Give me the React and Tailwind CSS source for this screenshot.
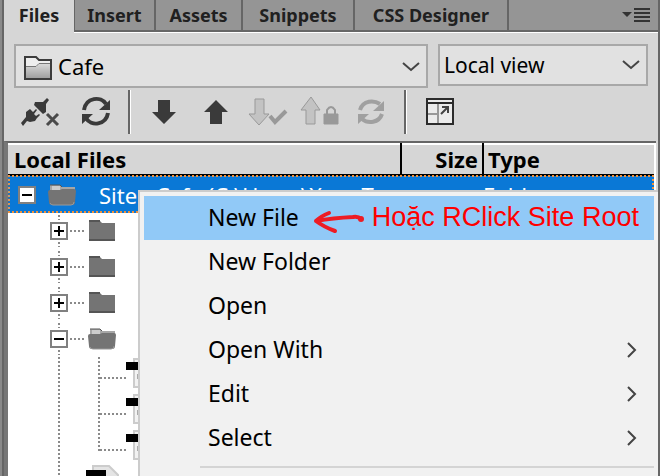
import React from "react";

const UI = "font-['Noto_Sans',sans-serif]";

function Chevron({ dir = "down", className = "" }) {
  return (
    <svg className={className} width="18" height="18" viewBox="0 0 18 18" fill="none" stroke="#444" strokeWidth="2" aria-hidden="true">
      <path d={dir === "down" ? "M1 5l8 7 8-7" : "M6 3l7 7-7 7"} />
    </svg>
  );
}

function SiteFolder({ className = "" }) {
  return (
    <svg className={className} width="28" height="24" viewBox="0 0 28 24" aria-hidden="true">
      <defs>
        <linearGradient id="sf" x1="0" y1="0" x2="0" y2="1">
          <stop offset="0" stopColor="#d8d8d8" />
          <stop offset="1" stopColor="#a0a0a0" />
        </linearGradient>
      </defs>
      <path d="M1 23V1h11l3 3h12v19z" fill="#eee" stroke="#3c3c3c" strokeWidth="2" />
      <path d="M2 22V11h10l3-3h11v14z" fill="url(#sf)" />
      <path d="M2 10.500h10l3-3h11" fill="none" stroke="#777" />
    </svg>
  );
}

function Folder({ open }) {
  return open ? (
    <svg width="28" height="22" viewBox="0 0 28 22" aria-hidden="true">
      <path d="M2 1h10l2 2h13v8H2z" fill="#a6a6a6" />
      <path d="M4 2h8v4H4z" fill="#ccc" />
      <path d="M2 1h10l2 2" fill="none" stroke="#555" strokeWidth="1" />
      <path d="M0 8q0-2 2-2h10l2-1h12q2 0 2 2l-1 11q0 3-3 3H4q-3 0-3-3z" fill="#747474" />
      <path d="M2 19q1 2 3 2h18q3 0 3-3" fill="none" stroke="#999" strokeWidth="1" />
    </svg>
  ) : (
    <svg width="28" height="22" viewBox="0 0 28 22" aria-hidden="true">
      <path d="M1 1h11l2 2h13v18H1z" fill="#747474" />
      <path d="M1 0h11v2H1zM1 19h26v2H1z" fill="#555" />
    </svg>
  );
}

function Toggle({ open, label }) {
  return (
    <button type="button" aria-label={label} aria-expanded={!!open} className="block size-[18px] shrink-0 border-2 border-[#808080] bg-white">
      <svg width="14" height="14" viewBox="0 0 14 14" aria-hidden="true">
        <path d={open ? "M2 7h10" : "M2 7h10M7 2v10"} stroke="#000" strokeWidth="2" />
      </svg>
    </button>
  );
}

const vDots = "w-[2px] bg-[repeating-linear-gradient(to_bottom,#8a8a8a_0px,#8a8a8a_2px,transparent_2px,transparent_4px)]";
const hDots = "h-[2px] bg-[repeating-linear-gradient(to_right,#8a8a8a_0px,#8a8a8a_2px,transparent_2px,transparent_4px)]";

function TreeRow({ open, label }) {
  return (
    <div className="flex h-9 items-center pl-[42px]">
      <div className="flex h-9 w-[18px] flex-col items-center">
        <span className={"my-[2px] flex-1 " + vDots} />
        <Toggle open={open} label={label} />
        <span className={"my-[2px] flex-1 " + vDots} />
      </div>
      <span className={"ml-[2px] mr-1 w-[14px] " + hDots} />
      <Folder open={open} />
    </div>
  );
}

function FileRow({ last }) {
  return (
    <div className="flex h-9 pl-[50px]">
      <span className={"h-9 " + vDots} />
      <span className="w-[38px]" />
      <span className={(last ? "h-[22px] " : "h-9 ") + vDots} />
      <span className={"mt-[20px] w-[26px] " + hDots} />
      <svg width="24" height="36" viewBox="0 0 24 36" aria-hidden="true">
        <path d="M8 2h16v28H8z" fill="#f2f2f2" stroke="#ccc" strokeWidth="2" />
        <path d="M11 17h12v5H11z" fill="#aaa" />
        <path d="M0 5h14v8H0z" fill="#000" />
      </svg>
    </div>
  );
}

const tools = [
  {
    label: "Connect", gap: "ml-[4px]", w: 40,
    art: (
      <g fill="#3a3a3a" stroke="none">
        <path d="M15 6h8l4-4 2 2-3 4v8l-3 2-9-9z" />
        <path d="M1 27l5-6v-5l4-3 3 3 3-3 1 1-3 4 2 2 3-2 1 1-3 3-2 3-5 1-3-1-4 5z" />
        <path d="M27 18l11 11M38 18L27 29" stroke="#4a4a4a" strokeWidth="3" />
      </g>
    ),
  },
  {
    label: "Refresh", gap: "ml-[21px]", w: 30,
    art: (
      <g fill="none" stroke="#3a3a3a" strokeWidth="4">
        <path d="M3 14C5 1 20 0 25 8M27 17C25 29 10 31 5 22" />
        <path d="M29 4v10H18zM1 28V18h11z" fill="#3a3a3a" stroke="none" />
      </g>
    ),
  },
  { separator: true, gap: "ml-[17px]" },
  { label: "Get files", gap: "ml-[21px]", w: 24, art: <path d="M6 4h12v12h6L12 28 0 16h6z" fill="#3a3a3a" /> },
  { label: "Put files", gap: "ml-[28px]", w: 24, art: <path d="M6 28h12V16h6L12 4 0 16h6z" fill="#3a3a3a" /> },
  {
    label: "Check out", gap: "ml-[20px]", w: 40, off: true,
    art: (
      <g stroke="#999" fill="#c3c3c3" strokeWidth="1">
        <path d="M7 3h9v15h5L11 29 1 18h6z" />
        <path d="M22 20l5 6 11-11" fill="none" strokeWidth="4" />
      </g>
    ),
  },
  {
    label: "Check in", gap: "ml-[12px]", w: 40, off: true,
    art: (
      <g stroke="#999" fill="#c3c3c3" strokeWidth="1">
        <path d="M6 28h9V14h5L11 1 1 14h5z" />
        <path d="M24 18h14v10H24z" fill="#999" />
        <path d="M27 19v-5q4-6 8 0v5" fill="none" strokeWidth="2" />
      </g>
    ),
  },
  {
    label: "Synchronize", gap: "ml-[17px]", w: 28, off: true,
    art: (
      <g fill="none" stroke="#a0a0a0" strokeWidth="4">
        <path d="M3 14C6 4 17 4 23 8M25 18C22 27 11 28 5 23" />
        <path d="M27 5v10H16zM1 28V18h11z" fill="#a0a0a0" stroke="none" />
      </g>
    ),
  },
  { separator: true, gap: "ml-[19px]" },
  {
    label: "Expand", gap: "ml-[18px]", w: 30,
    art: (
      <g fill="none" stroke="#2c2c2c" strokeWidth="2">
        <path d="M2 3h26v25H2z" fill="#ececec" />
        <path d="M2 7h26" />
        <path d="M13 8v19M3 18h10" stroke="#999" />
        <path d="M17 11h6v6M23 11l-7 7" stroke="#444" />
      </g>
    ),
  },
];

const tabs = [
  { name: "Insert", w: "w-[81px]" },
  { name: "Assets", w: "w-[87px]" },
  { name: "Snippets", w: "w-[112px]" },
  { name: "CSS Designer", w: "w-[154px]" },
];

const items = [
  { name: "New File", active: true },
  { name: "New Folder" },
  { name: "Open" },
  { name: "Open With", sub: true },
  { name: "Edit", sub: true },
  { name: "Select", sub: true },
];

export default function App() {
  return (
    <div className="h-screen border-l-2 border-[#8a8a8a]">
      <div className={"relative flex h-full flex-col overflow-hidden border-x-2 border-[#666] bg-[#d6d6d6] text-black " + UI}>
        <nav className="flex h-[33px] shrink-0 items-start text-[18px] font-bold text-[#202020]">
          <button type="button" className="h-[33px] w-[70px] pb-[3px] text-center">Files</button>
          <div className="flex h-[33px] flex-1 border-b border-white">
            <div className="flex flex-1 border-b-2 border-l border-[#666] bg-[#959595]">
              {tabs.map((t) => (
                <button key={t.name} type="button" className={"whitespace-nowrap border-r-2 border-[#666] text-center " + t.w}>{t.name}</button>
              ))}
              <button type="button" aria-label="Panel menu" className="ml-auto mr-2">
                <svg width="28" height="16" viewBox="0 0 28 16" aria-hidden="true">
                  <path d="M0 5h10l-5 5z" fill="#333" />
                  <path d="M12 2h16M12 6h16M12 10h16M12 14h16" stroke="#333" strokeWidth="2" />
                </svg>
              </button>
            </div>
          </div>
        </nav>

        <div className="mt-[11px] flex shrink-0 items-start gap-[10px] px-[10px] text-[22px]">
          <div className="relative min-w-0 flex-1">
            <SiteFolder className="pointer-events-none absolute left-[10px] top-[12px]" />
            <select aria-label="Site" className="block h-[44px] w-full appearance-none border-2 border-[#a8a8a8] bg-[#e1e1e1] pl-[42px]">
              <option>Cafe</option>
            </select>
            <Chevron className="pointer-events-none absolute right-[8px] top-[14px]" />
          </div>
          <div className="relative w-[210px]">
            <select aria-label="View" className="block h-[42px] w-full appearance-none border-2 border-[#a8a8a8] bg-[#e1e1e1] pl-1 pt-[2px] text-[21px]">
              <option>Local view</option>
            </select>
            <Chevron className="pointer-events-none absolute right-[8px] top-[12px]" />
          </div>
        </div>

        <div className="flex h-[53px] shrink-0 items-start pl-3 pt-[2px]">
          {tools.map((t, i) =>
            t.separator ? (
              <span key={i} className={"h-11 w-[3px] border-l-2 border-r border-l-[#666] border-r-white " + t.gap} />
            ) : (
              <button key={i} type="button" aria-label={t.label} disabled={t.off} className={"mt-[6px] shrink-0 " + t.gap}>
                <svg width={t.w} height="31" viewBox={"0 0 " + t.w + " 31"} aria-hidden="true">{t.art}</svg>
              </button>
            )
          )}
        </div>

        <div className="mr-[2px] flex-1 border-l-4 border-t-2 border-[#666] border-l-[#777] bg-white pr-[2px]">
          <table className="w-full table-fixed border-collapse">
            <colgroup>
              <col />
              <col className="w-[82px]" />
              <col className="w-[171px]" />
            </colgroup>
            <thead>
              <tr className="h-[31px] border-b-2 border-t-2 border-b-black border-t-white bg-[#d6d6d6] text-left text-[22px] leading-[25px]">
                <th className="border-r-2 border-black p-0 pl-[6px]">Local Files</th>
                <th className="border-r-2 border-black p-0 pr-1 text-right">Size</th>
                <th className="p-0 pl-1">Type</th>
              </tr>
            </thead>
            <tbody>
              <tr className="h-[38px] bg-[#0a78d6] text-[22px] leading-8 text-white outline-2 -outline-offset-2 outline-dotted outline-[#f0913c]">
                <td className="overflow-hidden p-0">
                  <div className="flex h-8 items-center whitespace-nowrap pl-[10px]">
                    <Toggle open label="Site" />
                    <span className="ml-3 mr-[23px]"><Folder open /></span>
                    Site - Cafe (C:\Users\XuanT...
                  </div>
                </td>
                <td className="p-0" />
                <td className="p-0">Folder</td>
              </tr>
            </tbody>
          </table>
          <TreeRow label="Folder 1" />
          <TreeRow label="Folder 2" />
          <TreeRow label="Folder 3" />
          <TreeRow label="Folder 4" open />
          <FileRow />
          <FileRow />
          <FileRow last />
          <div className="flex pl-[50px]">
            <span className={"h-9 " + vDots} />
            <svg className="ml-[26px]" width="34" height="36" viewBox="0 0 34 36" aria-hidden="true">
              <path d="M7 1h16l9 9v26H7z" fill="#e4e4e4" stroke="#ccc" strokeWidth="2" />
              <path d="M0 5h20v10H0z" fill="#000" />
            </svg>
          </div>
        </div>

        <div role="menu" className="absolute -right-[2px] bottom-0 left-[134px] top-[190px] border-x-2 border-t-2 border-[#ccc] bg-[#f1f1f1] px-1 pt-1 text-[23px]">
          {items.map((m) => (
            <button key={m.name} type="button" role="menuitem" className={"flex h-11 w-full items-center pb-[2px] pl-16 pr-[14px] text-left " + (m.active ? "bg-[#91c9f7]" : "")}>
              {m.name}
              {m.active && (
                <>
                  <svg className="ml-[14px] mt-[10px] shrink-0" width="52" height="26" viewBox="0 0 52 26" fill="none" stroke="#ed1c24" strokeWidth="4" strokeLinecap="round" strokeLinejoin="round" aria-hidden="true">
                    <path d="M48 10q-3-3-8-2Q20 9 3 12M16 4Q8 7 3 12q8 6 19 10" />
                    <circle cx="48" cy="10" r="1" />
                  </svg>
                  <span className="ml-[7px] whitespace-nowrap font-['Liberation_Sans',sans-serif] text-[27px] text-[#ff0000]">Hoặc RClick Site Root</span>
                </>
              )}
              {m.sub && <Chevron dir="right" className="ml-auto" />}
            </button>
          ))}
          <hr className="ml-14 mt-[6px] border-t-2 border-[#d4d4d4]" />
        </div>
      </div>
    </div>
  );
}
